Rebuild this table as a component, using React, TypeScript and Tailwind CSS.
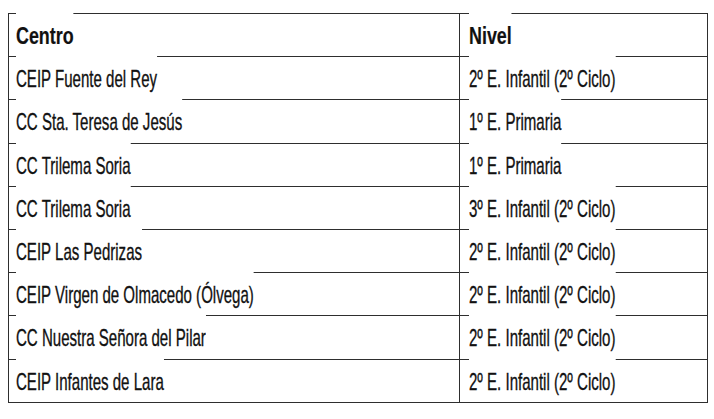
import type { ReactElement } from 'react';

interface Row {
  centro: string;
  nivel: string;
}

const rows: Row[] = [
  { centro: 'CEIP Fuente del Rey', nivel: '2º E. Infantil (2º Ciclo)' },
  { centro: 'CC Sta. Teresa de Jesús', nivel: '1º E. Primaria' },
  { centro: 'CC Trilema Soria', nivel: '1º E. Primaria' },
  { centro: 'CC Trilema Soria', nivel: '3º E. Infantil (2º Ciclo)' },
  { centro: 'CEIP Las Pedrizas', nivel: '2º E. Infantil (2º Ciclo)' },
  { centro: 'CEIP Virgen de Olmacedo (Ólvega)', nivel: '2º E. Infantil (2º Ciclo)' },
  { centro: 'CC Nuestra Señora del Pilar', nivel: '2º E. Infantil (2º Ciclo)' },
  { centro: 'CEIP Infantes de Lara', nivel: '2º E. Infantil (2º Ciclo)' },
];

// The white box behind each label hides the row line above it, as in the scanned table.
function Cell({ text, bold }: { text: string; bold?: boolean }): ReactElement {
  return (
    <span
      className={
        bold
          ? 'inline-block -mt-[1.5px] self-start whitespace-nowrap bg-white pt-[11.5px] text-[24px] leading-[24px] font-bold text-[#111] origin-left scale-x-[0.745] [-webkit-text-stroke:0.2px_#111]'
          : 'inline-block -mt-[1.5px] self-start whitespace-nowrap bg-white pt-[11.5px] text-[24px] leading-[24px] text-[#111] origin-left scale-x-[0.627] [-webkit-text-stroke:0.35px_#111]'
      }
    >
      {text}
    </span>
  );
}

function TableRow({ centro, nivel, header }: Row & { header?: boolean }): ReactElement {
  return (
    <div className="flex h-[43.2px] border-t-[1.5px] border-[#2e2e2e]">
      <div className="flex w-[451px] shrink-0 flex-col border-r-[1.5px] border-[#2e2e2e] pl-[7px]">
        <Cell text={centro} bold={header} />
      </div>
      <div className="flex flex-1 flex-col pl-[9.5px]">
        <Cell text={nivel} bold={header} />
      </div>
    </div>
  );
}

export default function App(): ReactElement {
  return (
    <div className="h-[419px] w-[714px] bg-white pt-[13px] pl-[7.5px] font-['Liberation_Sans',Arial,sans-serif]">
      <div className="w-[700.5px] border-x-[1.5px] border-b-[1.5px] border-[#2e2e2e]">
        <TableRow centro="Centro" nivel="Nivel" header />
        {rows.map((r, i) => (
          <TableRow key={i} centro={r.centro} nivel={r.nivel} />
        ))}
      </div>
    </div>
  );
}
